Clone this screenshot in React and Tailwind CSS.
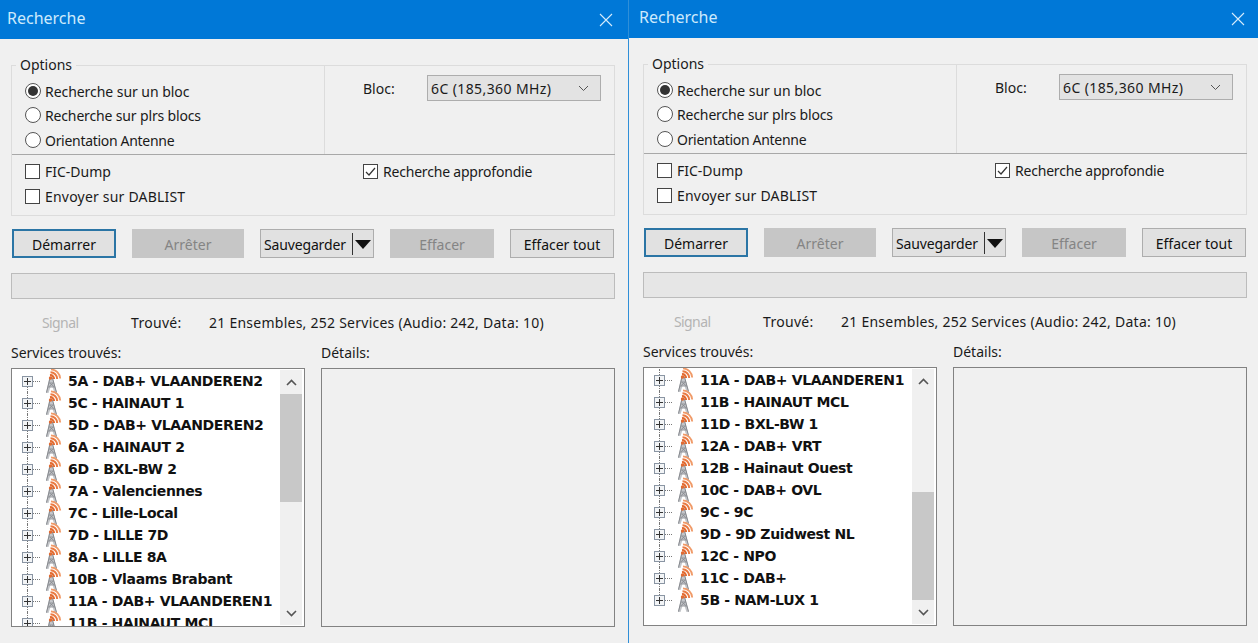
const leftRows = [
  '5A - DAB+ VLAANDEREN2', '5C - HAINAUT 1', '5D - DAB+ VLAANDEREN2', '6A - HAINAUT 2', '6D - BXL-BW 2',
  '7A - Valenciennes', '7C - Lille-Local', '7D - LILLE 7D', '8A - LILLE 8A', '10B - Vlaams Brabant',
  '11A - DAB+ VLAANDEREN1', '11B - HAINAUT MCL',
]
const rightRows = [
  '11A - DAB+ VLAANDEREN1', '11B - HAINAUT MCL', '11D - BXL-BW 1', '12A - DAB+ VRT', '12B - Hainaut Ouest',
  '10C - DAB+ OVL', '9C - 9C', '9D - 9D Zuidwest NL', '12C - NPO', '11C - DAB+', '5B - NAM-LUX 1',
]

function Tower() {
  return (
    <svg width="20" height="26" viewBox="0 0 20 26" fill="none" className="shrink-0 -my-[2px]">
      <path d="M6.5 9 H9.5 L14 25 H11.5 L9.5 19 H7.5 L5.5 25 H3 Z" fill="#c4c6ca" />
      <g stroke="#85888d" strokeWidth="1">
        <path d="M7 10 L3.5 24.5 M9.5 10 L13.5 24.5" />
        <path d="M6.5 15 H10.5 M5.5 19 H11.5 M6.5 15 L11.5 19 M10.5 15 L5.5 19" strokeWidth="0.8" />
      </g>
      <g fill="none">
        <path d="M7 7.2 A3.6 3.6 0 0 1 11 11" strokeWidth="2.1" stroke="#e26a30" />
        <path d="M7.5 4.2 A6.8 6.8 0 0 1 14.2 11" strokeWidth="2" stroke="#ea7a42" />
        <path d="M8 1.4 A9.6 9.6 0 0 1 17.2 10.5" strokeWidth="1.8" stroke="#f09a68" />
      </g>
      <circle cx="7.6" cy="10" r="1.8" fill="#e26a30" />
    </svg>
  )
}

function TreeRow({ label, first, last }) {
  return (
    <div className="relative flex items-center h-[22px] pl-[10px]">
      <span className={`absolute left-[15px] border-l border-dotted border-[#777] ${first ? 'top-[11px] bottom-0' : last ? 'top-0 h-[6px]' : 'top-0 bottom-0'}`} />
      <span className="relative flex items-center justify-center w-[11px] h-[11px] border border-[#8a95a3] bg-[#f2f4f6] shrink-0">
        <span className="absolute w-[7px] h-px bg-[#333]" />
        <span className="absolute h-[7px] w-px bg-[#333]" />
      </span>
      <span className="w-[7px] border-t border-dotted border-[#777] shrink-0" />
      <span className="ml-[3px]"><Tower /></span>
      <span className="ml-[5px] whitespace-nowrap font-['DejaVu_Sans'] font-bold text-[14px] tracking-[-0.35px] text-[#111]">{label}</span>
    </div>
  )
}

function Radio({ label, checked, tracking }) {
  return (
    <div className="flex items-center h-[24px] gap-[4px] pl-[13px]">
      <span className="flex items-center justify-center w-[16px] h-[16px] rounded-full border border-[#555] bg-white">
        {checked && <span className="w-[10px] h-[10px] rounded-full bg-[#333]" />}
      </span>
      <span className={tracking}>{label}</span>
    </div>
  )
}

function Check({ label, checked, tracking }) {
  return (
    <div className="flex items-center h-[25px] gap-[5px]">
      <span className="flex items-center justify-center w-[15px] h-[15px] border border-[#444] bg-white">
        {checked && (
          <svg width="13" height="13" viewBox="0 0 13 13" fill="none">
            <path d="M2 7 L5 10 L11 3" stroke="#333" strokeWidth="1.2" />
          </svg>
        )}
      </span>
      <span className={tracking}>{label}</span>
    </div>
  )
}

function Button({ label, width, disabled, primary }) {
  let tone = 'bg-[#e1e1e1] border border-[#adadad] text-[#111]'
  if (disabled) tone = 'bg-[#c6c6c6] text-[#848484]'
  if (primary) tone = 'bg-[#e1e1e1] border-2 border-[#2b75a5] text-[#111]'
  return (
    <div className={`flex items-center justify-center h-[29px] pt-px ${width} ${tone}`}>{label}</div>
  )
}

function Window({ rows, thumbTop, padding, title, closeGap }) {
  return (
    <div className="flex flex-col h-full bg-[#f0f0f0] font-['Noto_Sans'] text-[14px] text-[#1a1a1a]">
      <div className={`flex items-center justify-between h-[39px] shrink-0 bg-[#0078d7] ${title} ${closeGap}`}>
        <span className="text-[16px] text-[#cdeafc] pb-[3px]">Recherche</span>
        <svg width="14" height="14" viewBox="0 0 14 14" fill="none">
          <path d="M1 1 L13 13 M13 1 L1 13" stroke="#d5ecfb" strokeWidth="1.1" />
        </svg>
      </div>

      <div className={`flex flex-col ${padding}`}>
        {/* Options group */}
        <div className="relative mt-[26px] border border-[#dcdcdc] h-[151px] w-[604px]">
          <span className="absolute left-[4px] -top-[10px] px-[4px] leading-[18px] bg-[#f0f0f0]">Options</span>
          <div className="flex h-[89px] border-b border-[#a8a8a8] -mr-px">
            <div className="w-[313px] border-r border-[#dcdcdc] pt-[13px]">
              <Radio label="Recherche sur un bloc" checked tracking="tracking-[-0.05px]" />
              <Radio label="Recherche sur plrs blocs" tracking="tracking-[-0.15px]" />
              <div className="mt-[1px]"><Radio label="Orientation Antenne" tracking="tracking-[-0.3px]" /></div>
            </div>
            <div className="flex pt-[9px] pl-[38px]">
              <span className="w-[64px] pt-[3px]">Bloc:</span>
              <div className="flex items-center justify-between w-[174px] h-[26px] pl-[3px] pr-[11px] bg-[#e3e3e3] border border-[#adadad] tracking-[0.4px]">
                <span>6C (185,360 MHz)</span>
                <svg width="11" height="7" viewBox="0 0 11 7" fill="none">
                  <path d="M1 1 L5.5 5.5 L10 1" stroke="#555" strokeWidth="1" />
                </svg>
              </div>
            </div>
          </div>
          <div className="flex pt-[4px]">
            <div className="w-[351px] pl-[13px]">
              <Check label="FIC-Dump" />
              <Check label="Envoyer sur DABLIST" tracking="tracking-[0.2px]" />
            </div>
            <Check label="Recherche approfondie" checked tracking="tracking-[-0.2px]" />
          </div>
        </div>

        {/* Action buttons */}
        <div className="flex gap-[16px] mt-[13px] pl-px">
          <Button label="Démarrer" width="w-[104px]" primary />
          <Button label="Arrêter" width="w-[112px]" disabled />
          <div className="flex items-center h-[29px] w-[114px] pl-[3px] pt-px bg-[#e1e1e1] border border-[#adadad] text-[#111]">
            <span className="w-[88px] tracking-[-0.15px]">Sauvegarder</span>
            <span className="flex items-center justify-center flex-1 h-[22px] border-l border-[#333]">
              <span className="w-0 h-0 border-x-[8px] border-x-transparent border-t-[9px] border-t-[#111]" />
            </span>
          </div>
          <Button label="Effacer" width="w-[104px]" disabled />
          <Button label="Effacer tout" width="w-[104px]" />
        </div>

        {/* Progress */}
        <div className="mt-[15px] h-[26px] w-[604px] bg-[#e6e6e6] border border-[#bcbcbc]" />

        {/* Status line */}
        <div className="flex items-center h-[20px] mt-[13px]">
          <span className="w-[120px] pl-[31px] text-[#b4b4b4] tracking-[-0.6px]">Signal</span>
          <span className="w-[78px] tracking-[0.3px]">Trouvé:</span>
          <span className="tracking-[0.25px]">21 Ensembles, 252 Services (Audio: 242, Data: 10)</span>
        </div>

        {/* Lists */}
        <div className="flex gap-[16px] mt-[10px]">
          <div className="w-[294px]">
            <div className="h-[26px]">Services trouvés:</div>
            <div className="flex h-[259px] border border-[#828282] bg-white overflow-hidden">
              <div className="flex-1 min-w-0 pt-px">
                {rows.map((label, i) => (
                  <TreeRow key={label} label={label} first={i === 0 && rows === leftRows} last={i === rows.length - 1 && rows === rightRows} />
                ))}
              </div>
              <div className="flex flex-col w-[22px] my-px mr-[2px] bg-[#f0f0f0]">
                <div className="flex items-center justify-center h-[24px] shrink-0">
                  <svg width="11" height="7" viewBox="0 0 11 7" fill="none"><path d="M1 6 L5.5 1.5 L10 6" stroke="#555" strokeWidth="1.6" /></svg>
                </div>
                <div className="flex-1 flex flex-col">
                  <div style={{ height: thumbTop }} />
                  <div className="h-[108px] bg-[#c8c8c8]" />
                </div>
                <div className="flex items-center justify-center h-[24px] shrink-0">
                  <svg width="11" height="7" viewBox="0 0 11 7" fill="none"><path d="M1 1 L5.5 5.5 L10 1" stroke="#555" strokeWidth="1.6" /></svg>
                </div>
              </div>
            </div>
          </div>
          <div className="w-[294px]">
            <div className="h-[26px]">Détails:</div>
            <div className="h-[259px] border border-[#828282]" />
          </div>
        </div>
      </div>
    </div>
  )
}

export default function App() {
  return (
    <div className="flex w-[1258px] h-[643px] overflow-hidden">
      <div className="w-[628px] shrink-0">
        <Window rows={leftRows} thumbTop={0} padding="pl-[11px]" title="pl-[7px]" closeGap="pr-[15px]" />
      </div>
      <div className="w-px shrink-0 bg-[#2f8fd8]" />
      <div className="flex-1 min-w-0 -mt-px">
        <Window rows={rightRows} thumbTop={99} padding="pl-[14px]" title="pl-[10px]" closeGap="pr-[13px]" />
      </div>
    </div>
  )
}
